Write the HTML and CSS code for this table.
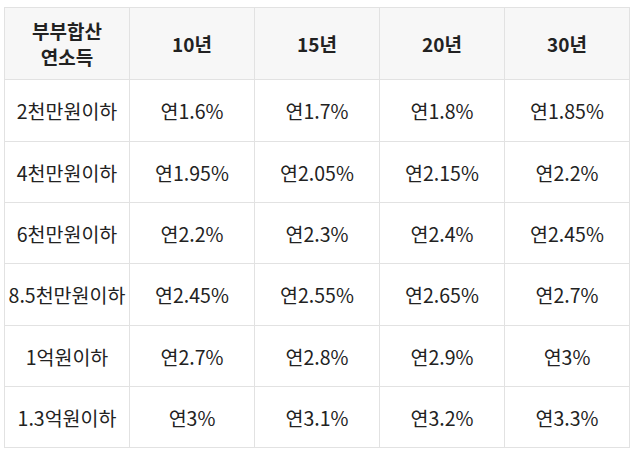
FILE: index.html
```html
<!DOCTYPE html>
<html lang="ko">
<head>
<meta charset="utf-8">
<link rel="stylesheet" href="styles.css">
</head>
<body>
<div class="wrap">
<table class="rates">
<colgroup><col><col><col><col><col></colgroup>
<thead>
<tr><th>부부합산<br>연소득</th><th>10년</th><th>15년</th><th>20년</th><th>30년</th></tr>
</thead>
<tbody>
<tr class="tall"><td>2천만원이하</td><td>연1.6%</td><td>연1.7%</td><td>연1.8%</td><td>연1.85%</td></tr>
<tr><td>4천만원이하</td><td>연1.95%</td><td>연2.05%</td><td>연2.15%</td><td>연2.2%</td></tr>
<tr><td>6천만원이하</td><td>연2.2%</td><td>연2.3%</td><td>연2.4%</td><td>연2.45%</td></tr>
<tr class="tall"><td>8.5천만원이하</td><td>연2.45%</td><td>연2.55%</td><td>연2.65%</td><td>연2.7%</td></tr>
<tr><td>1억원이하</td><td>연2.7%</td><td>연2.8%</td><td>연2.9%</td><td>연3%</td></tr>
<tr><td>1.3억원이하</td><td>연3%</td><td>연3.1%</td><td>연3.2%</td><td>연3.3%</td></tr>
</tbody>
</table>
</div>
</body>
</html>
```
FILE: styles.css
```css
html, body {
  margin: 0;
  padding: 0;
  background: #ffffff;
}
.wrap {
  padding: 7px 0 0 4px;
}
.rates {
  border-collapse: collapse;
  table-layout: fixed;
  width: 626px;
  font-family: "Noto Sans CJK KR", "Noto Sans", sans-serif;
  font-size: 19.5px;
  color: #222222;
}
.rates col {
  width: 125px;
}
.rates th,
.rates td {
  border: 1px solid #e2e2e2;
  text-align: center;
  vertical-align: middle;
  padding: 0;
}
.rates th {
  background: #f7f7f7;
  font-weight: 700;
  height: 71px;
  line-height: 26px;
  font-size: 19px;
}
.rates td {
  height: 60px;
  font-weight: 400;
}
.rates tr.tall td {
  height: 61px;
}
```
